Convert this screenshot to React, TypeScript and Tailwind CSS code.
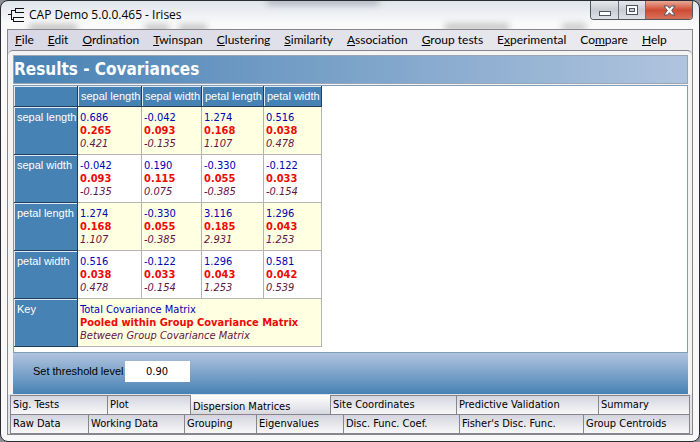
import React, { useState } from 'react';

const menus = [
  ['', 'F', 'ile'],
  ['', 'E', 'dit'],
  ['', 'O', 'rdination'],
  ['', 'T', 'winspan'],
  ['', 'C', 'lustering'],
  ['', 'S', 'imilarity'],
  ['', 'A', 'ssociation'],
  ['', 'G', 'roup tests'],
  ['E', 'x', 'perimental'],
  ['Co', 'm', 'pare'],
  ['', 'H', 'elp'],
];

const columns = ['sepal length', 'sepal width', 'petal length', 'petal width'];

// total, pooled within group, between group
const rows = [
  { name: 'sepal length', cells: [['0.686', '0.265', '0.421'], ['-0.042', '0.093', '-0.135'], ['1.274', '0.168', '1.107'], ['0.516', '0.038', '0.478']] },
  { name: 'sepal width', cells: [['-0.042', '0.093', '-0.135'], ['0.190', '0.115', '0.075'], ['-0.330', '0.055', '-0.385'], ['-0.122', '0.033', '-0.154']] },
  { name: 'petal length', cells: [['1.274', '0.168', '1.107'], ['-0.330', '0.055', '-0.385'], ['3.116', '0.185', '2.931'], ['1.296', '0.043', '1.253']] },
  { name: 'petal width', cells: [['0.516', '0.038', '0.478'], ['-0.122', '0.033', '-0.154'], ['1.296', '0.043', '1.253'], ['0.581', '0.042', '0.539']] },
];

const upperTabs = ['Sig. Tests', 'Plot', 'Dispersion Matrices', 'Site Coordinates', 'Predictive Validation', 'Summary'];
const lowerTabs = ['Raw Data', 'Working Data', 'Grouping', 'Eigenvalues', 'Disc. Func. Coef.', "Fisher's Disc. Func.", 'Group Centroids'];

const headCell = 'bg-[#4682b4] border-r border-b border-[#1f3f5c] text-left align-top font-normal text-white whitespace-nowrap shadow-[inset_1px_1px_0_#dfeaf4]';

function Triple({ values }: { values: string[] }) {
  return (
    <div className="leading-[13px] whitespace-nowrap">
      <div className="text-[#0000b4]">{values[0]}</div>
      <div className="font-bold text-[#f00808]">{values[1]}</div>
      <div className="text-[#641444] italic">{values[2]}</div>
    </div>
  );
}

function TitleBar() {
  return (
    <header className="relative flex h-7 justify-between pl-px">
      {/* glass smudges behind the caption */}
      <div className="absolute inset-0 overflow-hidden" aria-hidden="true">
        <span className="absolute top-[23px] left-[22px] h-2 w-12 bg-[#c4c4c4] blur-[3px]" />
        <span className="absolute top-[23px] left-[138px] h-2 w-6 bg-[#c8c8c8] blur-[3px]" />
        <span className="absolute top-[23px] left-[172px] h-2 w-7 bg-[#c8c8c8] blur-[3px]" />
        <span className="absolute top-[22px] left-[438px] h-2 w-16 bg-[#c8c8c8] blur-[3px]" />
        <span className="absolute top-[22px] left-[555px] h-2 w-6 bg-[#cccccc] blur-[3px]" />
        <span className="absolute -top-1 left-[260px] h-2 w-28 bg-[#b4b8c2] blur-[3px]" />
      </div>
      <div className="relative flex items-center gap-[5px]">
        <svg width="16" height="14" viewBox="0 0 16 14" fill="none" stroke="#111" shapeRendering="crispEdges">
          <path d="M0 6.500h4M3.500 2v10M3 2.500h4M3 11.500h3M7.500 0v5M7 0.500h9M7 4.500h9M5.500 9v5M5 9.500h11M5 13.500h11" />
        </svg>
        <h1 className="font-['Open_Sans','Noto_Sans',sans-serif] text-xs text-black">CAP Demo 5.0.0.465 - Irises</h1>
      </div>
      <div className="relative flex h-[19px] overflow-hidden rounded-b-[4px] border border-t-0 border-[#51555c]">
        <button aria-label="Minimize" className="flex w-7 items-center justify-center border-r border-[#6b6f76] bg-linear-to-b from-[#e6e8ec] via-[#c9ccd2] to-[#dfe1e6]">
          <svg width="12" height="11" viewBox="0 0 12 11" shapeRendering="crispEdges"><rect x="0.5" y="6.5" width="11" height="4" fill="#fff" stroke="#50545e" /></svg>
        </button>
        <button aria-label="Maximize" className="flex w-[27px] items-center justify-center border-r border-[#6b6f76] bg-linear-to-b from-[#e6e8ec] via-[#c9ccd2] to-[#dfe1e6]">
          <svg width="12" height="10" viewBox="0 0 12 10" shapeRendering="crispEdges"><rect x="0.5" y="0.5" width="11" height="9" fill="#fff" stroke="#50545e" /><rect x="3.5" y="3.5" width="5" height="3" fill="#c9ccd2" stroke="#50545e" /></svg>
        </button>
        <button aria-label="Close" className="flex w-[46px] items-center justify-center bg-linear-to-b from-[#e8a898] via-[#cf4a32] to-[#d8705c]">
          <svg width="13" height="11" viewBox="0 0 13 11"><path d="M1 1h3.500l2 2.300 2-2.300H12L8.700 5.500 12 10H8.500l-2-2.300-2 2.300H1l3.300-4.500z" fill="#fff" stroke="#50545e" /></svg>
        </button>
      </div>
    </header>
  );
}

export default function App() {
  const [tab, setTab] = useState('Dispersion Matrices');
  const [threshold, setThreshold] = useState('0.90');

  const renderTab = (name: string) => (
    <button
      key={name}
      role="tab"
      aria-selected={tab === name}
      onClick={() => setTab(name)}
      className={`h-[19px] overflow-hidden border-r border-[#85858a] pl-[2px] text-left whitespace-nowrap ${
        tab === name ? 'bg-linear-to-b from-white to-[#d8d8e0] pt-1' : 'border-t bg-linear-to-b from-[#d4d4de] to-[#f8f8fa]'
      }`}
    >
      {name}
    </button>
  );

  return (
    <div className="bg-[#8c8e94]">
      <div className="w-full rounded-lg border border-[#2a2c33] bg-linear-to-b from-[#dfe3ec] via-[#fafafa] via-5% to-[#f8f8f8] px-[6px] pb-[6px]">
        <TitleBar />
        <main className="relative border border-[#85858a] bg-[#e2e2ea]">
          <nav className="flex h-5 items-center gap-[14px] bg-linear-to-r from-[#d8d8e6] to-[#ececf0] pl-[7px] font-['Lato','Open_Sans',sans-serif] text-xs text-black">
            {menus.map(([before, key, after]) => (
              <button key={before + key + after} className="whitespace-nowrap">
                {before}<span className="underline">{key}</span>{after}
              </button>
            ))}
          </nav>

          <div className="rounded-t-[5px] border-t border-[#85858a] bg-[#f4f4f4] pt-1 pr-1 pl-[5px] font-['DejaVu_Sans_Condensed','DejaVu_Sans',sans-serif] text-[11px]">
            <h2 className="h-[29px] border border-[#9aa6b4] bg-linear-to-r from-[#4682b4] to-[#b0c4de] text-[17px] leading-[27px] font-bold text-white">
              Results - Covariances
            </h2>
            <section className="mt-px h-[268px] border border-[#7f9db9] bg-white">
              <table className="table-fixed border-separate border-spacing-0">
                <colgroup>
                  <col className="w-16" />
                  <col className="w-16" />
                  <col className="w-[60px]" />
                  <col className="w-[62px]" />
                  <col className="w-[58px]" />
                </colgroup>
                <thead className="font-['Liberation_Sans',sans-serif]">
                  <tr className="h-[21px]">
                    <th className={headCell}></th>
                    {columns.map((c) => (
                      <th key={c} scope="col" className={`${headCell} pt-1 pl-[3px] leading-[13px]`}>{c}</th>
                    ))}
                  </tr>
                </thead>
                <tbody>
                  {rows.map((row) => (
                    <tr key={row.name} className="h-12 odd:bg-[#ffffe1]">
                      <th scope="row" className={`${headCell} pt-1 pl-[3px] font-['Liberation_Sans',sans-serif] leading-[13px]`}>{row.name}</th>
                      {row.cells.map((values, i) => (
                        <td key={i} className="border-r border-b border-[#b4b4b4] pt-1 pl-[2px] align-top">
                          <Triple values={values} />
                        </td>
                      ))}
                    </tr>
                  ))}
                  <tr className="h-12 odd:bg-[#ffffe1]">
                    <th scope="row" className={`${headCell} pt-1 pl-[3px] font-['Liberation_Sans',sans-serif] leading-[13px]`}>Key</th>
                    <td colSpan={4} className="border-r border-b border-[#b4b4b4] pt-1 pl-[2px] align-top">
                      <Triple values={['Total Covariance Matrix', 'Pooled within Group Covariance Matrix', 'Between Group Covariance Matrix']} />
                    </td>
                  </tr>
                </tbody>
              </table>
            </section>
            <div className="flex h-[41px] items-center gap-px bg-linear-to-b from-[#b0c4de] to-[#4682b4] pb-1 pl-5 font-['Liberation_Sans',sans-serif] text-black">
              <label htmlFor="threshold">Set threshold level</label>
              <input
                id="threshold"
                value={threshold}
                onChange={(e) => setThreshold(e.target.value)}
                className="h-[21px] w-[65px] bg-white text-center font-['DejaVu_Sans_Condensed','DejaVu_Sans',sans-serif] outline-none"
              />
            </div>
          </div>

          <div role="tablist" className="mx-[2px] mt-px border-b border-l border-[#85858a] font-['DejaVu_Sans_Condensed','DejaVu_Sans',sans-serif] text-[11px] text-black">
            <div className="grid grid-cols-[97fr_83fr_140fr_126fr_142fr_91fr]">{upperTabs.map(renderTab)}</div>
            <div className="grid grid-cols-[78fr_96fr_72fr_87fr_116fr_124fr_106fr]">{lowerTabs.map(renderTab)}</div>
          </div>
        </main>
      </div>
    </div>
  );
}
